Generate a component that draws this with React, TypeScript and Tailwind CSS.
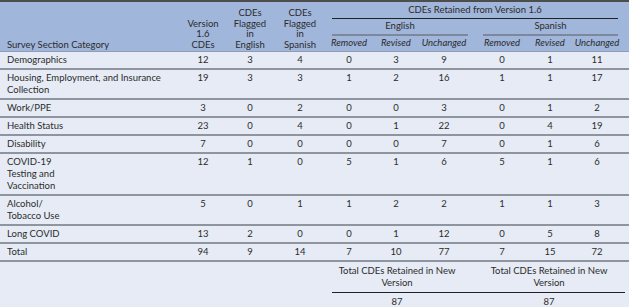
const cols =
  "grid grid-cols-[180px_46px_48px_52px_46px_48px_48px_10px_48px_48px_46px_9px]";

type Row = [string, ...number[]];

const rows: Row[] = [
  ["Demographics", 12, 3, 4, 0, 3, 9, 0, 1, 11],
  ["Housing, Employment, and Insurance\nCollection", 19, 3, 3, 1, 2, 16, 1, 1, 17],
  ["Work/PPE", 3, 0, 2, 0, 0, 3, 0, 1, 2],
  ["Health Status", 23, 0, 4, 0, 1, 22, 0, 4, 19],
  ["Disability", 7, 0, 0, 0, 0, 7, 0, 1, 6],
  ["COVID-19\nTesting and\nVaccination", 12, 1, 0, 5, 1, 6, 5, 1, 6],
  ["Alcohol/\nTobacco Use", 5, 0, 1, 1, 2, 2, 1, 1, 3],
  ["Long COVID", 13, 2, 0, 0, 1, 12, 0, 5, 8],
  ["Total", 94, 9, 14, 7, 10, 77, 7, 15, 72],
];

function DataRow({ row }: { row: Row }) {
  const [label, ...n] = row;
  return (
    <div className={`${cols} border-b-2 border-[#8f959f] pt-[2px] pb-[2px] leading-[12px]`}>
      <div className="whitespace-pre-line pl-[7px]">{label}</div>
      {n.slice(0, 6).map((v, i) => (
        <div key={i} className="text-center">
          {v}
        </div>
      ))}
      <div />
      {n.slice(6).map((v, i) => (
        <div key={i} className="text-center">
          {v}
        </div>
      ))}
      <div />
    </div>
  );
}

export default function App() {
  return (
    <div
      className="w-[629px] h-[307px] overflow-hidden bg-[#e6ebf5] text-[9.5px] text-[#2b2b2b]"
      style={{ fontFamily: "Lato, 'Open Sans', sans-serif" }}
    >
      {/* header */}
      <div
        className={`${cols} grid-rows-[17px_17px_15px] border-t-2 border-[#4d4d4d] bg-[#a1b6db] leading-[10.5px]`}
      >
        <div className="row-span-3 flex items-end pl-[7px] pb-[1px]">
          Survey Section Category
        </div>
        <div className="row-span-3 flex items-end justify-center pb-[1px] text-center whitespace-pre-line">
          {"Version\n1.6\nCDEs"}
        </div>
        <div className="row-span-3 flex items-end justify-center pb-[1px] text-center whitespace-pre-line">
          {"CDEs\nFlagged\nin\nEnglish"}
        </div>
        <div className="row-span-3 flex items-end justify-center pb-[1px] text-center whitespace-pre-line">
          {"CDEs\nFlagged\nin\nSpanish"}
        </div>
        <div className="col-start-5 col-span-7 row-start-1 ml-[6px] mr-[2px] flex items-center justify-center border-b border-[#222]">
          CDEs Retained from Version 1.6
        </div>
        <div className="col-start-5 col-span-3 row-start-2 ml-[6px] flex items-center justify-center border-b-2 border-[#7d889c]">
          English
        </div>
        <div className="col-start-9 col-span-3 row-start-2 ml-[5px] mr-[2px] flex items-center justify-center border-b-2 border-[#7d889c]">
          Spanish
        </div>
        {["Removed", "Revised", "Unchanged"].map((t, i) => (
          <div
            key={"e" + t}
            className={`row-start-3 flex items-center justify-center italic ${
              i === 0 ? "col-start-5" : i === 1 ? "col-start-6" : "col-start-7"
            }`}
          >
            {t}
          </div>
        ))}
        {["Removed", "Revised", "Unchanged"].map((t, i) => (
          <div
            key={"s" + t}
            className={`row-start-3 flex items-center justify-center italic ${
              i === 0 ? "col-start-9" : i === 1 ? "col-start-10" : "col-start-11"
            }`}
          >
            {t}
          </div>
        ))}
      </div>
      <div className="h-px bg-[#8f9cb5]" />

      {rows.map((r) => (
        <DataRow key={r[0]} row={r} />
      ))}

      {/* footer */}
      <div className={`${cols} border-b-2 border-[#8f959f] leading-[12px]`}>
        <div className="col-start-5 col-span-3 pt-[3px] pb-[3px] text-center whitespace-pre-line">
          {"Total CDEs Retained in New\nVersion"}
        </div>
        <div className="col-start-9 col-span-3 pt-[3px] pb-[3px] text-center whitespace-pre-line">
          {"Total CDEs Retained in New\nVersion"}
        </div>
        <div className="col-start-5 col-span-8 row-start-2 ml-[6px] mr-[4px] h-px bg-[#222]" />
        <div className="col-start-5 col-span-3 row-start-3 py-[3px] text-center">87</div>
        <div className="col-start-9 col-span-3 row-start-3 py-[3px] text-center">87</div>
      </div>
    </div>
  );
}
